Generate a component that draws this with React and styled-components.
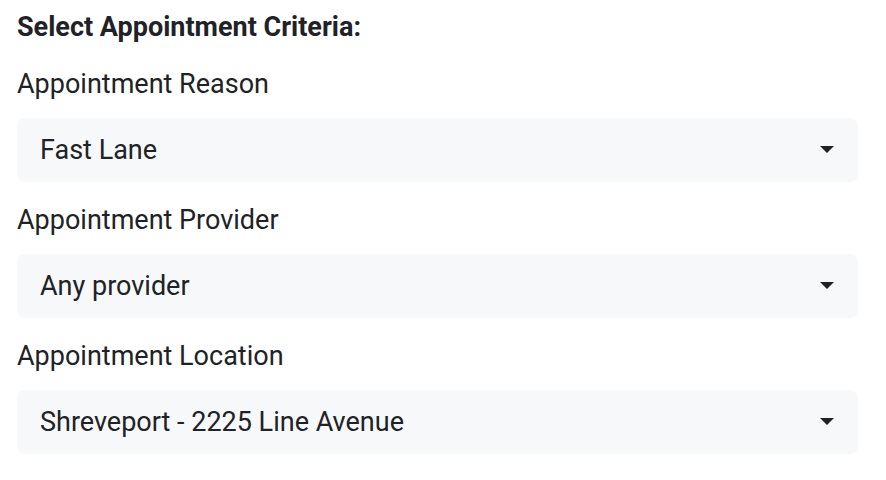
import React from "react";
import styled, { createGlobalStyle } from "styled-components";

const Global = createGlobalStyle`
  html, body { margin: 0; padding: 0; background: #fff; }
  body { font-family: Roboto, "Noto Sans", sans-serif; color: #202124; }
`;

const Page = styled.div`
  padding: 12px 28px 0 17px;
  display: flex;
  flex-direction: column;
`;

const Heading = styled.h2`
  margin: 0 0 4px;
  font-size: 27px;
  font-weight: 700;
  line-height: 30px;
  color: #1f2226;
`;

const Field = styled.div`
  display: flex;
  flex-direction: column;
`;

const Label = styled.label`
  font-size: 27px;
  line-height: 30px;
  padding: 23px 0 19px;
  color: #202226;
`;

const Select = styled.div`
  height: 64px;
  border-radius: 8px;
  background: #f7f8fa;
  display: flex;
  align-items: center;
  justify-content: space-between;
  padding: 0 24px 0 23px;
  font-size: 27px;
  color: #202226;
`;

const Caret = styled.svg`
  width: 14px;
  height: 8px;
  flex: none;
`;

const fields = [
  ["Appointment Reason", "Fast Lane"],
  ["Appointment Provider", "Any provider"],
  ["Appointment Location", "Shreveport - 2225 Line Avenue"],
];

export default function App() {
  return (
    <>
      <Global />
      <Page>
        <Heading>Select Appointment Criteria:</Heading>
        {fields.map(([l, v]) => (
          <Field key={l}>
            <Label>{l}</Label>
            <Select>
              <span>{v}</span>
              <Caret viewBox="0 0 14 8">
                <path d="M0 0h14L7 7z" fill="#202124" />
              </Caret>
            </Select>
          </Field>
        ))}
      </Page>
    </>
  );
}
